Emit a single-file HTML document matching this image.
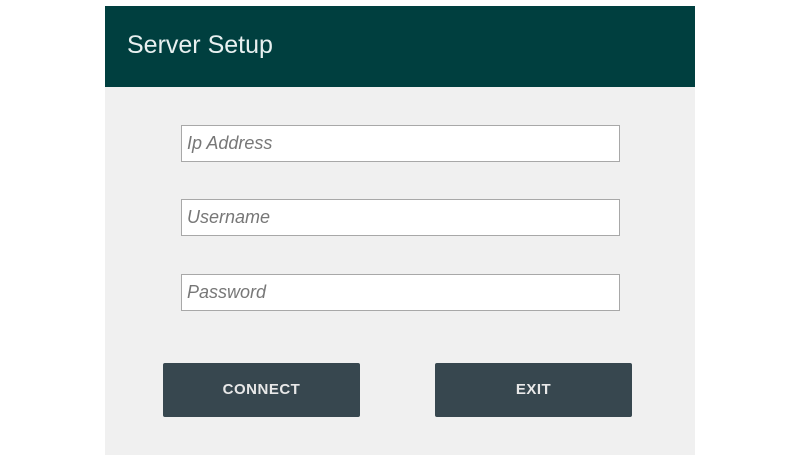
<!DOCTYPE html>
<html><head><style>
body{margin:0;width:800px;height:463px;background:#fff;position:relative;overflow:hidden;font-family:"Liberation Sans",sans-serif}
.panel{position:absolute;left:105px;top:6px;width:590px;height:449px;background:#f0f0f0}
.hdr{position:absolute;left:105px;top:6px;width:590px;height:81px;background:#003f3f}
.hdr span{position:absolute;left:22px;top:25px;color:#e8f0f0;font-size:25px}
.in{position:absolute;left:181px;width:437px;height:35px;background:#fff;border:1px solid #a8a8a8}
.in span{position:absolute;left:5px;top:7px;font-style:italic;color:#777;font-size:18px}
.btn{position:absolute;top:363px;width:197px;height:54px;background:#37474f;color:#e8e8e8;font-size:15px;font-weight:bold;text-align:center;line-height:54px;border-radius:2px;letter-spacing:.5px}
</style></head><body>
<div class="panel"></div>
<div class="hdr"><span>Server Setup</span></div>
<div class="in" style="top:125px"><span>Ip Address</span></div>
<div class="in" style="top:199px"><span>Username</span></div>
<div class="in" style="top:274px"><span>Password</span></div>
<div class="btn" style="left:163px">CONNECT</div>
<div class="btn" style="left:435px">EXIT</div>
</body></html>
